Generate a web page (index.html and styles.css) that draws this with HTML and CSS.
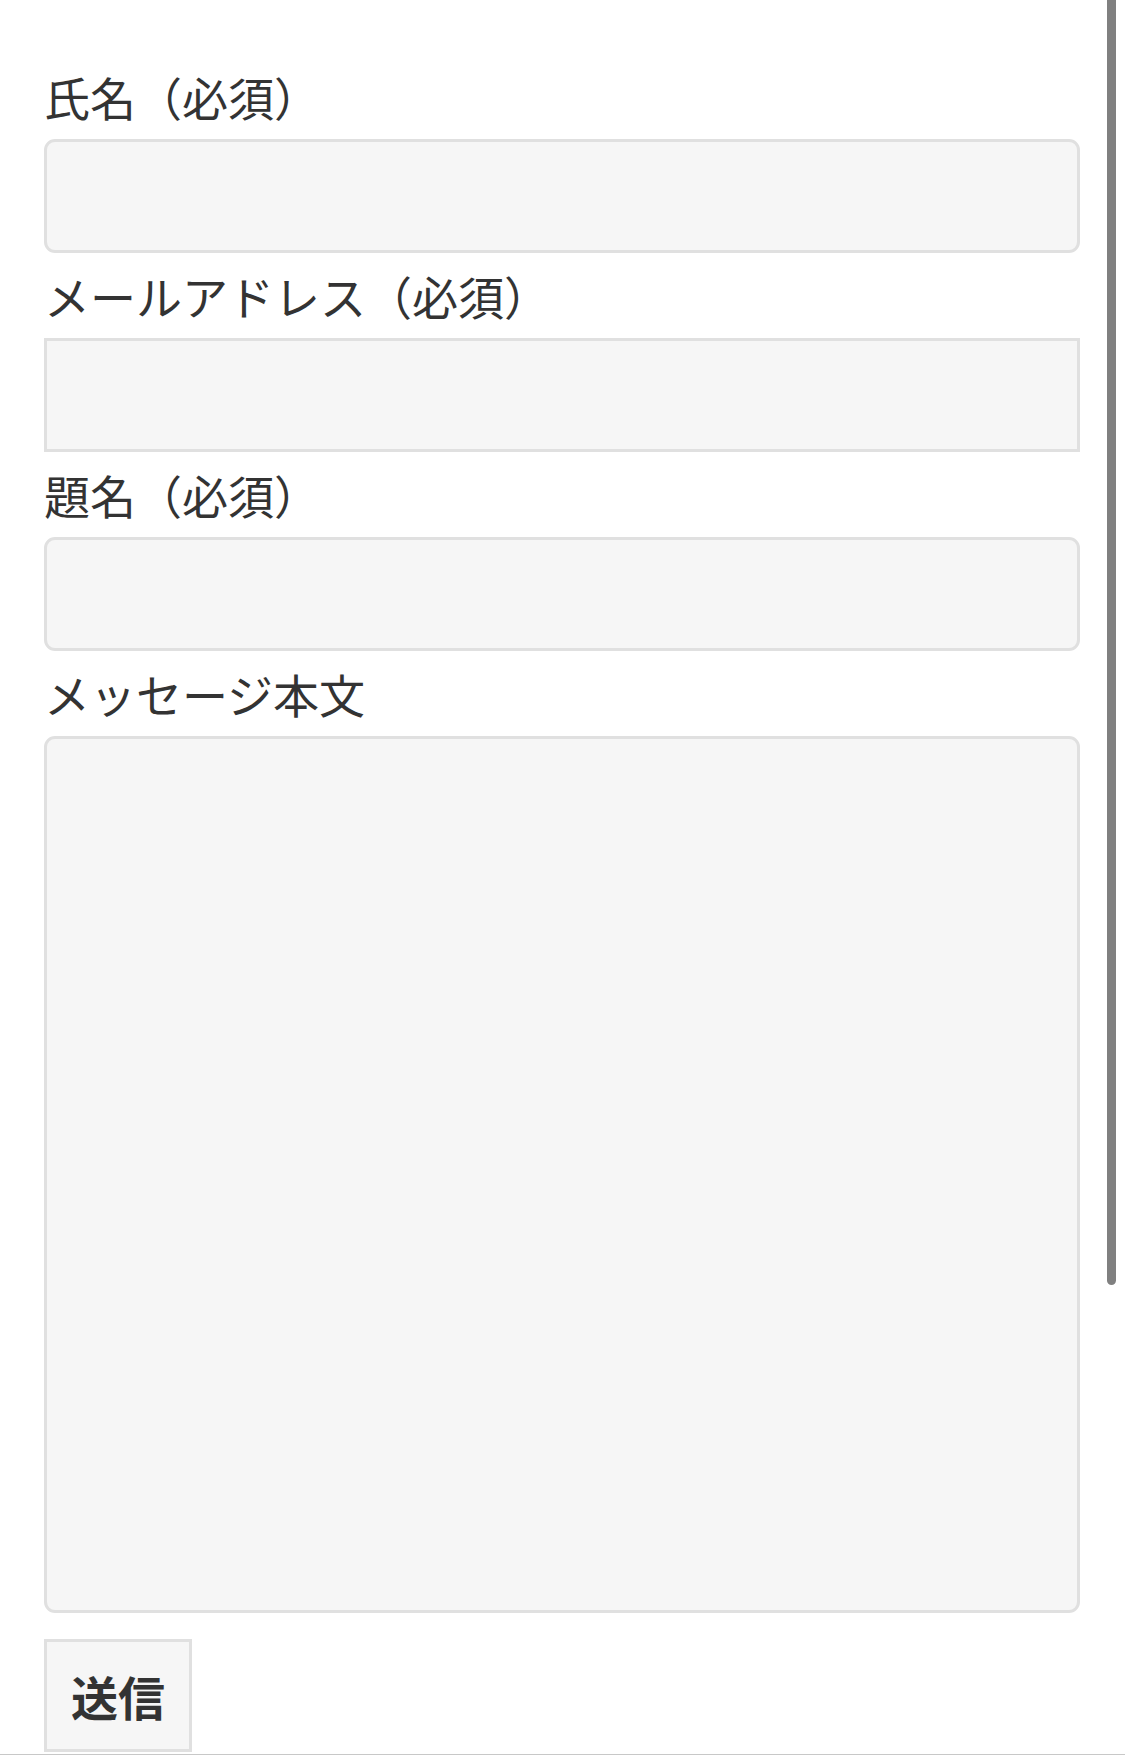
FILE: index.html
```html
<!DOCTYPE html>
<html lang="ja">
<head>
  <meta charset="UTF-8" />
  <meta name="viewport" content="width=device-width, initial-scale=1" />
  <title>お問い合わせ</title>
  <link rel="stylesheet" href="styles.css">
</head>
<body>
  <form class="contact" action="#" method="post">
    <label class="field">
      <span class="label">氏名（必須）</span>
      <input class="input" type="text" name="your-name" />
    </label>
    <label class="field">
      <span class="label">メールアドレス（必須）</span>
      <input class="input input-email" type="email" name="your-email" />
    </label>
    <label class="field">
      <span class="label">題名（必須）</span>
      <input class="input" type="text" name="your-subject" />
    </label>
    <label class="field">
      <span class="label">メッセージ本文</span>
      <textarea class="input textarea" name="your-message"></textarea>
    </label>
    <div class="actions">
      <button class="submit" type="submit">送信</button>
    </div>
  </form>
  <div class="footer-line"></div>
  <div class="scrollbar"></div>
</body>
</html>
```

FILE: styles.css
```css
* {
  box-sizing: border-box;
  margin: 0;
  padding: 0;
}
body {
  font-family: "Noto Sans CJK JP", "Noto Sans", sans-serif;
  color: #333;
  background: #fff;
  overflow: hidden;
}
.contact {
  display: flex;
  flex-direction: column;
  padding: 54px 45px 0 44px;
}
.field {
  display: flex;
  flex-direction: column;
}
.label {
  display: block;
  font-size: 46px;
  line-height: 85px;
  height: 85px;
  white-space: nowrap;
}
.input {
  display: block;
  width: 100%;
  height: 114px;
  background: #f6f6f6;
  border: 3px solid #e0e0e0;
  border-radius: 11px;
  font-family: inherit;
  font-size: 42px;
  color: #333;
  padding: 8px 16px;
  outline: none;
}
.input-email {
  border-radius: 0;
}
.textarea {
  height: 877px;
  resize: none;
}
.actions {
  margin-top: 26px;
}
.submit {
  width: 148px;
  height: 113px;
  background: #f6f6f6;
  border: 3px solid #e0e0e0;
  border-radius: 0;
  font-family: inherit;
  font-size: 47px;
  font-weight: bold;
  color: #333;
  cursor: pointer;
}
.footer-line {
  margin-top: 2px;
  border-top: 1px solid #c8c8c8;
}
.scrollbar {
  position: absolute;
  top: 0;
  left: 1107px;
  width: 9px;
  height: 1285px;
  background: #808080;
  border-radius: 0 0 5px 5px;
}
```
